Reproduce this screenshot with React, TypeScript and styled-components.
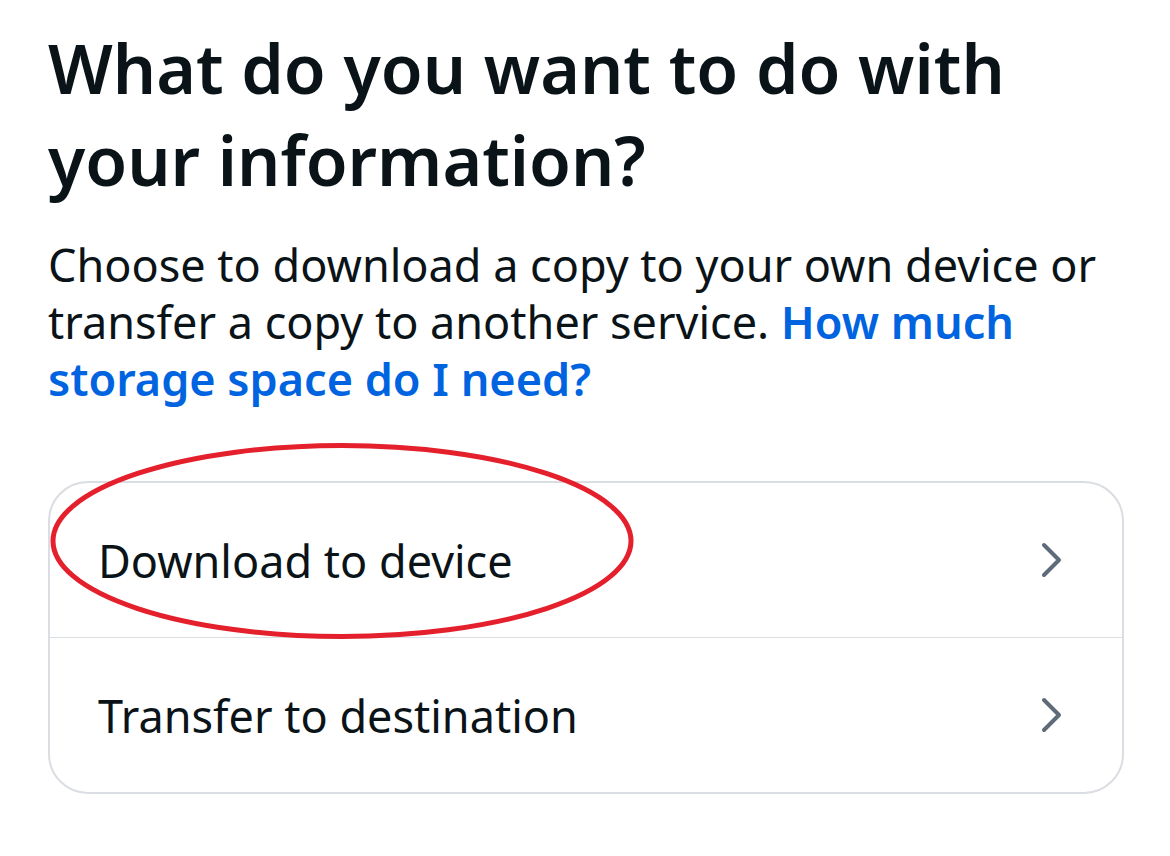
import React from 'react'
import styled, { createGlobalStyle } from 'styled-components'

const GlobalStyle = createGlobalStyle`
  html, body {
    margin: 0;
    padding: 0;
    background: #ffffff;
  }
  body {
    font-family: "Noto Sans", "Liberation Sans", sans-serif;
    color: #0a1317;
  }
`

const Page = styled.main`
  width: 1170px;
  height: 856px;
  box-sizing: border-box;
  padding: 22px 48px 0 48px;
  display: flex;
  flex-direction: column;
`

const Title = styled.h1`
  margin: 0;
  font-size: 68px;
  line-height: 92px;
  font-weight: 600;
  color: #0a1317;
`

const Intro = styled.p`
  margin: 30px 0 0 0;
  font-size: 45px;
  line-height: 57px;
  font-weight: 400;
  color: #0a1317;
`

const HelpLink = styled.a`
  color: #0064e0;
  font-weight: 600;
  text-decoration: none;
`

const Card = styled.div`
  position: relative;
  margin-top: 74px;
  width: 1072px;
  border: 2.5px solid #dadde1;
  border-radius: 40px;
  display: flex;
  flex-direction: column;
`

const Row = styled.div<{ $divider?: boolean }>`
  height: 154px;
  display: flex;
  align-items: center;
  justify-content: space-between;
  padding: 0 58px 0 48px;
  border-bottom: ${p => (p.$divider ? '1.5px solid #dadde1' : 'none')};
  font-size: 45px;
  font-weight: 400;
  color: #0a1317;
`

const Chevron = () => (
  <svg width="24" height="36" viewBox="0 0 24 36" fill="none">
    <path d="M4 3 L19 18 L4 33" stroke="#5e6b78" strokeWidth="4" strokeLinecap="round" strokeLinejoin="round" />
  </svg>
)

const Circle = styled.svg`
  position: absolute;
  left: -1px;
  top: -40px;
  pointer-events: none;
`

const options = ['Download to device', 'Transfer to destination']

export default function App() {
  return (
    <Page>
      <GlobalStyle />
      <Title>What do you want to do with your information?</Title>
      <Intro>
        Choose to download a copy to your own device or transfer a copy to another service.{' '}
        <HelpLink>How much storage space do I need?</HelpLink>
      </Intro>
      <Card>
        {options.map((o, i) => (
          <Row key={o} $divider={i === 0}>
            <span>{o}</span>
            <Chevron />
          </Row>
        ))}
        <Circle width="590" height="200" viewBox="0 0 590 200">
          <ellipse cx="293" cy="98" rx="289" ry="95.5" stroke="#e3202b" strokeWidth="5" fill="none" />
        </Circle>
      </Card>
    </Page>
  )
}
